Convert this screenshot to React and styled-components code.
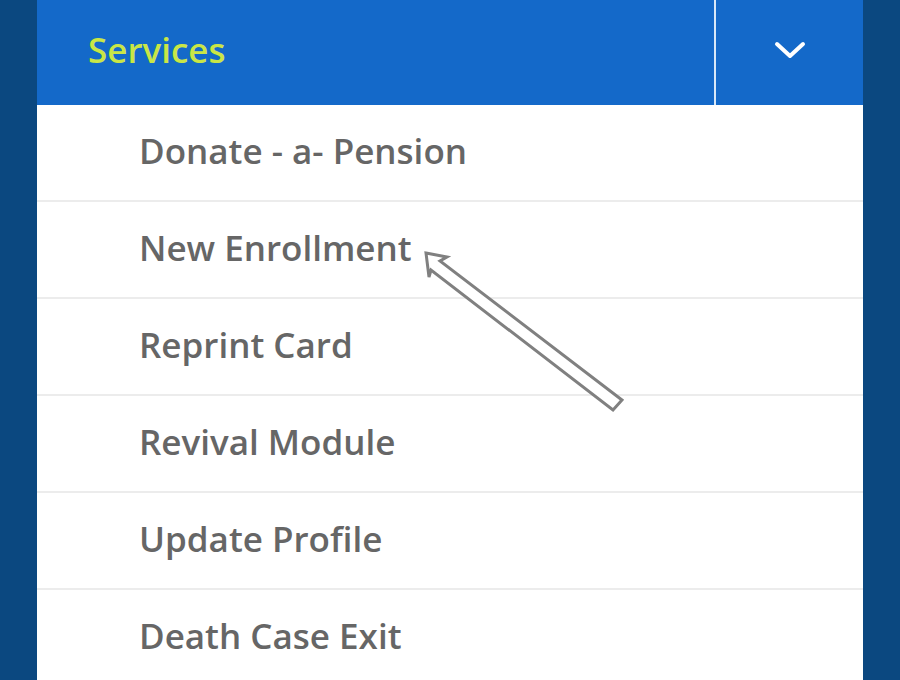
import React from 'react';
import styled, { createGlobalStyle } from 'styled-components';

const GlobalStyle = createGlobalStyle`
  *, *::before, *::after {
    box-sizing: border-box;
  }
  html, body {
    margin: 0;
    padding: 0;
    background: #0b4880;
    font-family: "Open Sans", "Noto Sans", sans-serif;
  }
`;

const items = [
  'Donate - a- Pension',
  'New Enrollment',
  'Reprint Card',
  'Revival Module',
  'Update Profile',
  'Death Case Exit',
];

export default function App() {
  return (
    <Page>
      <GlobalStyle />
      <Panel>
        <Header>
          <Title>Services</Title>
          <Toggle>
            <svg width="34" height="20" viewBox="0 0 34 20">
              <path
                d="M4 4 L17 16 L30 4"
                fill="none"
                stroke="#fff"
                strokeWidth="4"
                strokeLinecap="round"
                strokeLinejoin="round"
              />
            </svg>
          </Toggle>
        </Header>
        <Menu>
          {items.map((label) => (
            <Item key={label}>{label}</Item>
          ))}
        </Menu>
        <Pointer viewBox="0 0 220 170" width="220" height="170">
          <path
            d="M3 3 L24 7 L17 11 L199 150 L190 160 L8 20 L6 27 Z"
            fill="#fff"
            stroke="#808080"
            strokeWidth="3"
            strokeLinejoin="miter"
          />
        </Pointer>
      </Panel>
    </Page>
  );
}

const Page = styled.div`
  width: 900px;
  height: 680px;
  overflow: hidden;
  display: flex;
  justify-content: center;
`;

const Panel = styled.div`
  position: relative;
  width: 826px;
  background: #fff;
  display: flex;
  flex-direction: column;
`;

const Header = styled.div`
  flex-shrink: 0;
  height: 105px;
  background: #1469c9;
  display: flex;
  align-items: stretch;
`;

const Title = styled.div`
  flex: 1;
  display: flex;
  align-items: center;
  padding-left: 51px;
  padding-bottom: 6px;
  color: #c9e646;
  font-size: 35px;
  font-weight: 600;
  border-right: 2px solid #d8e8f8;
`;

const Toggle = styled.div`
  width: 147px;
  display: flex;
  align-items: center;
  justify-content: center;
  padding-bottom: 6px;
`;

const Menu = styled.div`
  display: flex;
  flex-direction: column;
`;

const Item = styled.div`
  flex-shrink: 0;
  height: 97px;
  display: flex;
  align-items: center;
  padding-left: 102px;
  padding-bottom: 4px;
  color: #666;
  font-size: 35px;
  font-weight: 600;
  border-bottom: 2px solid #ececec;
`;

const Pointer = styled.svg`
  position: absolute;
  left: 386px;
  top: 250px;
`;
